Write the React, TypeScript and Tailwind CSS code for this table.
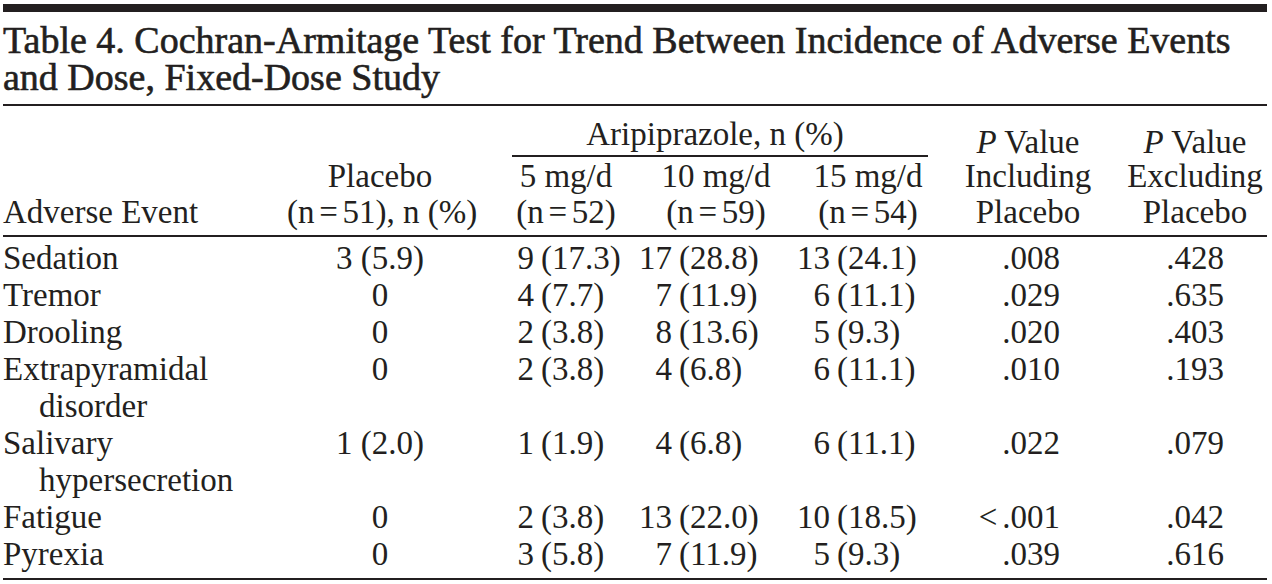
import React from "react";

type Dose = [string, string];
type Row = [string, string, Dose, Dose, Dose, string, string];

const rows: Row[] = [
  ["Sedation", "3 (5.9)", ["9", "17.3"], ["17", "28.8"], ["13", "24.1"], ".008", ".428"],
  ["Tremor", "0", ["4", "7.7"], ["7", "11.9"], ["6", "11.1"], ".029", ".635"],
  ["Drooling", "0", ["2", "3.8"], ["8", "13.6"], ["5", "9.3"], ".020", ".403"],
  ["Extrapyramidal disorder", "0", ["2", "3.8"], ["4", "6.8"], ["6", "11.1"], ".010", ".193"],
  ["Salivary hypersecretion", "1 (2.0)", ["1", "1.9"], ["4", "6.8"], ["6", "11.1"], ".022", ".079"],
  ["Fatigue", "0", ["2", "3.8"], ["13", "22.0"], ["10", "18.5"], "<.001", ".042"],
  ["Pyrexia", "0", ["3", "5.8"], ["7", "11.9"], ["5", "9.3"], ".039", ".616"],
];

function DoseCell({ d, pad }: { d: Dose; pad: string }) {
  return (
    <div className={`flex whitespace-nowrap ${pad}`}>
      <span className="w-[34px] shrink-0 text-right">{d[0]}</span>
      <span className="ml-[7px]">({d[1]})</span>
    </div>
  );
}

function PVal({ v }: { v: string }) {
  if (v.startsWith("<")) {
    return (
      <>
        <span className="mr-[5px]">&lt;</span>
        {v.slice(1)}
      </>
    );
  }
  return <>{v}</>;
}

function N({ n }: { n: string }) {
  return <span className="[word-spacing:-3.5px]">(n = {n})</span>;
}

export default function App() {
  return (
    <div className="w-[1272px] h-[584px] overflow-hidden bg-white font-['Liberation_Serif','Times_New_Roman',serif] text-[#231f20]">
      <div className="ml-[3px] w-[1264px] pt-[4px]">
        <div className="h-[8px] bg-[#231f20]" />
        <h1 className="mt-[10px] text-[38px] leading-[37px] font-normal whitespace-nowrap [-webkit-text-stroke:0.6px_#231f20]">
          <div>Table 4. Cochran-Armitage Test for Trend Between Incidence of Adverse Events</div>
          <div>and Dose, Fixed-Dose Study</div>
        </h1>
        <div className="mt-[8px] h-[2px] bg-[#231f20]" />

        <div className="text-[33px]">
          {/* header */}
          <div className="flex h-[129px] leading-[36px] pb-[5.5px] whitespace-nowrap">
            <div className="w-[284px] flex flex-col justify-end">
              <div>Adverse Event</div>
            </div>
            <div className="w-[186px] flex flex-col justify-end text-center">
              <div>Placebo</div>
              <div>
                <N n="51" />, n (%)
              </div>
            </div>
            <div className="w-[490px] flex flex-col justify-end">
              <div className="ml-[39px] mr-[35px] text-center pr-[10px]">Aripiprazole, n (%)</div>
              <div className="ml-[39px] mr-[35px] mt-[3px] mb-[1px] h-[2px] bg-[#231f20]" />
              <div className="flex text-center">
                <div className="w-[168px] pl-[18px]">
                  <div>5 mg/d</div>
                  <div>
                    <N n="52" />
                  </div>
                </div>
                <div className="w-[150px]">
                  <div>10 mg/d</div>
                  <div>
                    <N n="59" />
                  </div>
                </div>
                <div className="w-[172px] pr-[18px]">
                  <div>15 mg/d</div>
                  <div>
                    <N n="54" />
                  </div>
                </div>
              </div>
            </div>
            <div className="w-[130px] flex flex-col justify-end text-center">
              <div className="-mb-[2px]">
                <i>P</i> Value
              </div>
              <div>Including</div>
              <div>Placebo</div>
            </div>
            <div className="w-[174px] pl-[30px] flex flex-col justify-end text-center">
              <div className="-mb-[2px]">
                <i>P</i> Value
              </div>
              <div>Excluding</div>
              <div>Placebo</div>
            </div>
          </div>
          <div className="h-[2px] bg-[#231f20]" />

          {/* body */}
          <div className="pt-[3px] pb-[5px] leading-[37px]">
            {rows.map((r) => (
              <div
                key={r[0]}
                className="grid grid-cols-[284px_186px_168px_150px_172px_130px_174px] items-start"
              >
                <div className="pl-[36px] -indent-[36px]">{r[0]}</div>
                <div className="text-center">{r[1]}</div>
                <DoseCell d={r[2]} pad="pl-[27px]" />
                <DoseCell d={r[3]} pad="-ml-[3px]" />
                <DoseCell d={r[4]} pad="pl-[5px]" />
                <div className="text-right pr-[33px] whitespace-nowrap">
                  <PVal v={r[5]} />
                </div>
                <div className="pl-[30px] text-center">{r[6]}</div>
              </div>
            ))}
          </div>
          <div className="h-[2px] bg-[#231f20]" />
        </div>
      </div>
    </div>
  );
}
